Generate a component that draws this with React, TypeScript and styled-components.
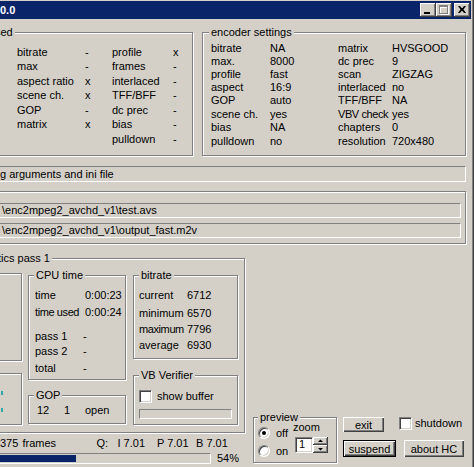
import styled, { createGlobalStyle } from "styled-components";

const GlobalStyle = createGlobalStyle`
  * {
    box-sizing: border-box;
  }
  html,
  body {
    margin: 0;
    padding: 0;
    background: #d4d0c8;
  }
  body {
    font-family: "Liberation Sans", Arial, sans-serif;
    font-size: 11px;
    color: #000;
  }
`;

const Window = styled.div`
  width: 474px;
  height: 467px;
  overflow: hidden;
  background: #d4d0c8;
  padding: 1px 3px 0 0;
  box-shadow: inset -1px 0 #404040, inset -2px 0 #808080;
`;

const TitleBar = styled.div`
  display: flex;
  align-items: center;
  height: 18px;
  padding-right: 1px;
  background: #0a246a;
  color: #fff;
  font-weight: bold;
`;

const Title = styled.span`
  flex: 1;
  line-height: 18px;
`;

const CaptionButton = styled.div<{ $gap?: boolean }>`
  width: 16px;
  height: 14px;
  margin-left: ${(p) => (p.$gap ? 2 : 0)}px;
  background: #d4d0c8;
  box-shadow: inset -1px -1px #404040, inset 1px 1px #fff,
    inset -2px -2px #808080;
  svg {
    display: block;
  }
`;

const Body = styled.div`
  display: flex;
  flex-direction: column;
  margin-left: -12px;
`;

const TopRow = styled.div`
  display: flex;
  gap: 9px;
  margin-top: 7px;
`;

const Group = styled.fieldset<{ $w: number; $h: number; $mt?: number }>`
  flex: none;
  min-width: 0;
  width: ${(p) => p.$w}px;
  height: ${(p) => p.$h}px;
  margin: ${(p) => p.$mt ?? 0}px 0 0 0;
  padding: 0;
  border: 1px solid #808080;
  box-shadow: inset 1px 1px #fff, 1px 1px #fff;
`;

const Legend = styled.legend<{ $offset?: number }>`
  margin-left: ${(p) => p.$offset ?? 5}px;
  padding: 0 2px;
  font-size: 11px;
  line-height: 13px;
  background: #d4d0c8;
`;

const Etched = styled.div<{ $w: number; $h: number; $mt?: number }>`
  flex: none;
  width: ${(p) => p.$w}px;
  height: ${(p) => p.$h}px;
  margin-top: ${(p) => p.$mt ?? 0}px;
  border: 1px solid #808080;
  box-shadow: inset 1px 1px #fff, 1px 1px #fff;
`;

const ParamGrid = styled.div`
  display: grid;
  grid-template-columns: 68px 27px 61px auto;
  grid-auto-rows: 14.5px;
  line-height: 14.5px;
  padding: 5.5px 0 0 28px;
`;

const EncoderGrid = styled.div`
  display: grid;
  grid-template-columns: 59px 68px 54px auto;
  grid-template-rows: repeat(7, 13.2px) 14.2px;
  align-items: end;
  line-height: 13.2px;
  padding: 2.7px 0 0 8px;
`;

// Tahoma is narrower than Liberation Sans on capitals and "m"
const Cell = styled.span<{ $tight?: boolean }>`
  white-space: nowrap;
  letter-spacing: ${(p) => (p.$tight ? "-0.4px" : "normal")};
`;

const tightWords = new Set(["VBV check", "maximum", "time used"]);

const StatusBox = styled.div`
  width: 478px;
  height: 16px;
  margin-top: 10px;
  padding-left: 11px;
  line-height: 14px;
  border: 1px solid;
  border-color: #808080 #fff #fff #808080;
  white-space: nowrap;
`;

const PathsGroup = styled.div`
  display: flex;
  flex-direction: column;
  gap: 5px;
  width: 478px;
  height: 53px;
  margin-top: 9px;
  padding: 11px 4px 0 0;
  border: 1px solid #808080;
  box-shadow: inset 1px 1px #fff, 1px 1px #fff;
`;

const PathBox = styled.div`
  height: 15px;
  padding-left: 12px;
  line-height: 13px;
  border: 1px solid;
  border-color: #808080 #fff #fff #808080;
  white-space: nowrap;
`;

const LowerRow = styled.div`
  display: flex;
  align-items: flex-end;
  margin-top: 8px;
`;

const LeftCol = styled.div`
  display: flex;
  flex-direction: column;
  width: 257px;
`;

const StatsRow = styled.div`
  display: flex;
`;

const StatsCol = styled.div<{ $w: number; $ml?: number }>`
  display: flex;
  flex-direction: column;
  width: ${(p) => p.$w}px;
  margin-left: ${(p) => p.$ml ?? 0}px;
`;

const Inner = styled.div<{ $pt: number; $pl: number }>`
  padding: ${(p) => p.$pt}px 0 0 ${(p) => p.$pl}px;
`;

const StatLine = styled.div<{ $col: number; $mt?: number }>`
  display: grid;
  grid-template-columns: ${(p) => p.$col}px auto;
  margin-top: ${(p) => p.$mt ?? 0}px;
  line-height: 14px;
  white-space: nowrap;
`;

const GopLine = styled.div`
  display: grid;
  grid-template-columns: 27px 21px auto;
  line-height: 14px;
`;

const TealMark = styled.span<{ $mt: number }>`
  display: block;
  width: 2px;
  height: 4px;
  margin: ${(p) => p.$mt}px 0 0 11px;
  background: #2fa8a8;
`;

const CheckRow = styled.div<{ $gap: number; $ml?: number }>`
  display: flex;
  align-items: center;
  gap: ${(p) => p.$gap}px;
  margin-left: ${(p) => p.$ml ?? 0}px;
  line-height: 13px;
  white-space: nowrap;
`;

const CheckBox = styled.span`
  flex: none;
  width: 13px;
  height: 13px;
  background: #fff;
  border: 1px solid;
  border-color: #808080 #fff #fff #808080;
  box-shadow: inset 1px 1px #404040, inset -1px -1px #d4d0c8;
`;

const BufferBar = styled.div`
  width: 93px;
  height: 10px;
  margin-top: 6px;
  border: 1px solid;
  border-color: #808080 #fff #fff #808080;
`;

const FramesLine = styled.div`
  display: grid;
  grid-template-columns: 22.5px 74px 21px 39.5px 39px auto;
  margin-top: 3px;
  padding-left: 12px;
  line-height: 14px;
  white-space: nowrap;
`;

const ProgressRow = styled.div`
  display: flex;
  align-items: center;
  margin-top: 3px;
`;

const ProgressBar = styled.div`
  width: 223px;
  height: 11px;
  padding: 1px;
  border: 1px solid;
  border-color: #808080 #fff #fff #808080;
`;

const ProgressFill = styled.div<{ $px: number }>`
  width: ${(p) => p.$px}px;
  height: 100%;
  background: #0a246a;
`;

const Percent = styled.span`
  margin-left: 6px;
  line-height: 11px;
`;

const RightCol = styled.div`
  display: flex;
  align-items: flex-start;
  margin: 0 0 1px 8px;
`;

const PreviewBody = styled.div`
  display: flex;
  padding-left: 4px;
`;

const RadioCol = styled.div`
  display: flex;
  flex-direction: column;
  width: 35px;
`;

const RadioRow = styled.div`
  display: flex;
  align-items: center;
  gap: 6px;
  height: 18px;
`;

const Radio = styled.span<{ $on?: boolean }>`
  position: relative;
  flex: none;
  width: 12px;
  height: 12px;
  border-radius: 50%;
  background: #fff;
  border: 1px solid;
  border-color: #808080 #fff #fff #808080;
  box-shadow: inset 1px 1px #404040, inset -1px -1px #d4d0c8;
  &::after {
    content: "";
    display: ${(p) => (p.$on ? "block" : "none")};
    position: absolute;
    left: 3px;
    top: 3px;
    width: 4px;
    height: 4px;
    border-radius: 50%;
    background: #000;
  }
`;

const ZoomCol = styled.div`
  display: flex;
  flex-direction: column;
`;

const ZoomLabel = styled.span`
  margin-top: -2px;
  line-height: 11px;
`;

const Spin = styled.div`
  display: flex;
  margin: 4px 0 0 2px;
`;

const SpinEdit = styled.div`
  width: 18px;
  height: 16px;
  padding-left: 3px;
  line-height: 12px;
  background: #fff;
  border: 1px solid;
  border-color: #808080 #fff #fff #808080;
  box-shadow: inset 1px 1px #404040, inset -1px -1px #d4d0c8;
`;

const SpinButtons = styled.div`
  display: flex;
  flex-direction: column;
`;

const SpinButton = styled.div`
  width: 15px;
  height: 8px;
  background: #d4d0c8;
  box-shadow: inset -1px -1px #404040, inset 1px 1px #fff,
    inset -2px -2px #808080;
  svg {
    display: block;
  }
`;

const ButtonArea = styled.div`
  display: flex;
  flex-direction: column;
  margin: 6px 0 0 6px;
`;

const ButtonRow = styled.div<{ $mt?: number; $gap?: number }>`
  display: flex;
  align-items: flex-start;
  gap: ${(p) => p.$gap ?? 0}px;
  margin-top: ${(p) => p.$mt ?? 0}px;
`;

const Button = styled.div<{ $w: number; $h: number; $default?: boolean }>`
  display: flex;
  align-items: center;
  justify-content: center;
  width: ${(p) => p.$w}px;
  height: ${(p) => p.$h}px;
  background: #d4d0c8;
  white-space: nowrap;
  border: ${(p) => (p.$default ? "1px solid #000" : "none")};
  box-shadow: inset 1px 1px #fff, inset -1px -1px #404040,
    inset -2px -2px #808080;
`;

const usedParams = [
  ["bitrate", "-", "profile", "x"],
  ["max", "-", "frames", "-"],
  ["aspect ratio", "x", "interlaced", "-"],
  ["scene ch.", "x", "TFF/BFF", "-"],
  ["GOP", "-", "dc prec", "-"],
  ["matrix", "x", "bias", "-"],
  ["", "", "pulldown", "-"],
];

const encoderSettings = [
  ["bitrate", "NA", "matrix", "HVSGOOD"],
  ["max.", "8000", "dc prec", "9"],
  ["profile", "fast", "scan", "ZIGZAG"],
  ["aspect", "16:9", "interlaced", "no"],
  ["GOP", "auto", "TFF/BFF", "NA"],
  ["scene ch.", "yes", "VBV check", "yes"],
  ["bias", "NA", "chapters", "0"],
  ["pulldown", "no", "resolution", "720x480"],
];

function App() {
  return (
    <>
      <GlobalStyle />
      <Window>
        <TitleBar>
          <Title>0.0</Title>
          <CaptionButton>
            <svg width="16" height="14" viewBox="0 0 16 14">
              <rect x="4" y="9" width="6" height="2" fill="#000" />
            </svg>
          </CaptionButton>
          <CaptionButton>
            <svg width="16" height="14" viewBox="0 0 16 14">
              <path
                d="M4 3h9v9h-9zM5 5h7v6h-7z"
                fill="#fff"
                fillRule="evenodd"
              />
              <path
                d="M3 2h9v9h-9zM4 4h7v6h-7z"
                fill="#808080"
                fillRule="evenodd"
              />
            </svg>
          </CaptionButton>
          <CaptionButton $gap>
            <svg width="16" height="14" viewBox="0 0 16 14">
              <path
                d="M4 3h2l1.5 2h1l1.5-2h2l-2.5 3.5 2.5 3.5h-2l-1.5-2h-1l-1.5 2h-2l2.5-3.5z"
                fill="#000"
              />
            </svg>
          </CaptionButton>
        </TitleBar>

        <Body>
          <TopRow>
            <Group $w={205} $h={130}>
              <Legend $offset={4}>sed</Legend>
              <ParamGrid>
                {usedParams.map((row, i) =>
                  row.map((c, j) => <Cell key={`${i}-${j}`}>{c}</Cell>)
                )}
              </ParamGrid>
            </Group>
            <Group $w={264} $h={130}>
              <Legend $offset={6}>encoder settings</Legend>
              <EncoderGrid>
                {encoderSettings.map((row, i) =>
                  row.map((c, j) => (
                    <Cell key={`${i}-${j}`} $tight={tightWords.has(c)}>
                      {c}
                    </Cell>
                  ))
                )}
              </EncoderGrid>
            </Group>
          </TopRow>

          <StatusBox>g arguments and ini file</StatusBox>

          <PathsGroup>
            <PathBox>{"\\enc2mpeg2_avchd_v1\\test.avs"}</PathBox>
            <PathBox>{"\\enc2mpeg2_avchd_v1\\output_fast.m2v"}</PathBox>
          </PathsGroup>

          <LowerRow>
            <LeftCol>
              <Group $w={257} $h={181}>
                <Legend $offset={7}>tics pass 1</Legend>
                <StatsRow>
                  <StatsCol $w={33}>
                    <Etched $w={33} $h={88} $mt={8} />
                    <Etched $w={33} $h={52} $mt={12}>
                      <TealMark $mt={17} />
                      <TealMark $mt={13} />
                    </Etched>
                  </StatsCol>

                  <StatsCol $w={98} $ml={6}>
                    <Group $w={98} $h={111} $mt={4}>
                      <Legend>CPU time</Legend>
                      <Inner $pt={6} $pl={6}>
                        <StatLine $col={50}>
                          <span>time</span>
                          <span>0:00:23</span>
                        </StatLine>
                        <StatLine $col={50} $mt={3}>
                          <Cell $tight>time used</Cell>
                          <span>0:00:24</span>
                        </StatLine>
                        <StatLine $col={48} $mt={10}>
                          <span>pass 1</span>
                          <span>-</span>
                        </StatLine>
                        <StatLine $col={48} $mt={1}>
                          <span>pass 2</span>
                          <span>-</span>
                        </StatLine>
                        <StatLine $col={48} $mt={3}>
                          <span>total</span>
                          <span>-</span>
                        </StatLine>
                      </Inner>
                    </Group>
                    <Group $w={98} $h={35} $mt={9}>
                      <Legend>GOP</Legend>
                      <Inner $pt={1} $pl={8}>
                        <GopLine>
                          <span>12</span>
                          <span>1</span>
                          <span>open</span>
                        </GopLine>
                      </Inner>
                    </Group>
                  </StatsCol>

                  <StatsCol $w={105} $ml={7}>
                    <Group $w={105} $h={90} $mt={4}>
                      <Legend>bitrate</Legend>
                      <Inner $pt={6} $pl={5}>
                        <StatLine $col={48}>
                          <span>current</span>
                          <span>6712</span>
                        </StatLine>
                        <StatLine $col={48} $mt={4}>
                          <span>minimum</span>
                          <span>6570</span>
                        </StatLine>
                        <StatLine $col={48} $mt={2}>
                          <Cell $tight>maximum</Cell>
                          <span>7796</span>
                        </StatLine>
                        <StatLine $col={48} $mt={2}>
                          <span>average</span>
                          <span>6930</span>
                        </StatLine>
                      </Inner>
                    </Group>
                    <Group $w={105} $h={56} $mt={10}>
                      <Legend>VB Verifier</Legend>
                      <Inner $pt={8} $pl={5}>
                        <CheckRow $gap={5}>
                          <CheckBox />
                          <span>show buffer</span>
                        </CheckRow>
                        <BufferBar />
                      </Inner>
                    </Group>
                  </StatsCol>
                </StatsRow>
              </Group>

              <FramesLine>
                <span>375</span>
                <span>frames</span>
                <span>Q:</span>
                <span>I 7.01</span>
                <span>P 7.01</span>
                <span>B 7.01</span>
              </FramesLine>
              <ProgressRow>
                <ProgressBar>
                  <ProgressFill $px={86} />
                </ProgressBar>
                <Percent>54%</Percent>
              </ProgressRow>
            </LeftCol>

            <RightCol>
              <Group $w={84} $h={52}>
                <Legend $offset={4}>preview</Legend>
                <PreviewBody>
                  <RadioCol>
                    <RadioRow>
                      <Radio $on />
                      <span>off</span>
                    </RadioRow>
                    <RadioRow>
                      <Radio />
                      <span>on</span>
                    </RadioRow>
                  </RadioCol>
                  <ZoomCol>
                    <ZoomLabel>zoom</ZoomLabel>
                    <Spin>
                      <SpinEdit>1</SpinEdit>
                      <SpinButtons>
                        <SpinButton>
                          <svg width="15" height="8" viewBox="0 0 15 8">
                            <path d="M5 5h5l-2.5-2.5z" fill="#000" />
                          </svg>
                        </SpinButton>
                        <SpinButton>
                          <svg width="15" height="8" viewBox="0 0 15 8">
                            <path d="M5 3h5l-2.5 2.5z" fill="#000" />
                          </svg>
                        </SpinButton>
                      </SpinButtons>
                    </Spin>
                  </ZoomCol>
                </PreviewBody>
              </Group>

              <ButtonArea>
                <ButtonRow>
                  <Button $w={41} $h={15}>
                    exit
                  </Button>
                  <CheckRow $gap={3} $ml={15}>
                    <CheckBox />
                    <span>shutdown</span>
                  </CheckRow>
                </ButtonRow>
                <ButtonRow $mt={8} $gap={8}>
                  <Button $w={53} $h={17} $default>
                    suspend
                  </Button>
                  <Button $w={60} $h={17}>
                    about HC
                  </Button>
                </ButtonRow>
              </ButtonArea>
            </RightCol>
          </LowerRow>
        </Body>
      </Window>
    </>
  );
}

export default App;
